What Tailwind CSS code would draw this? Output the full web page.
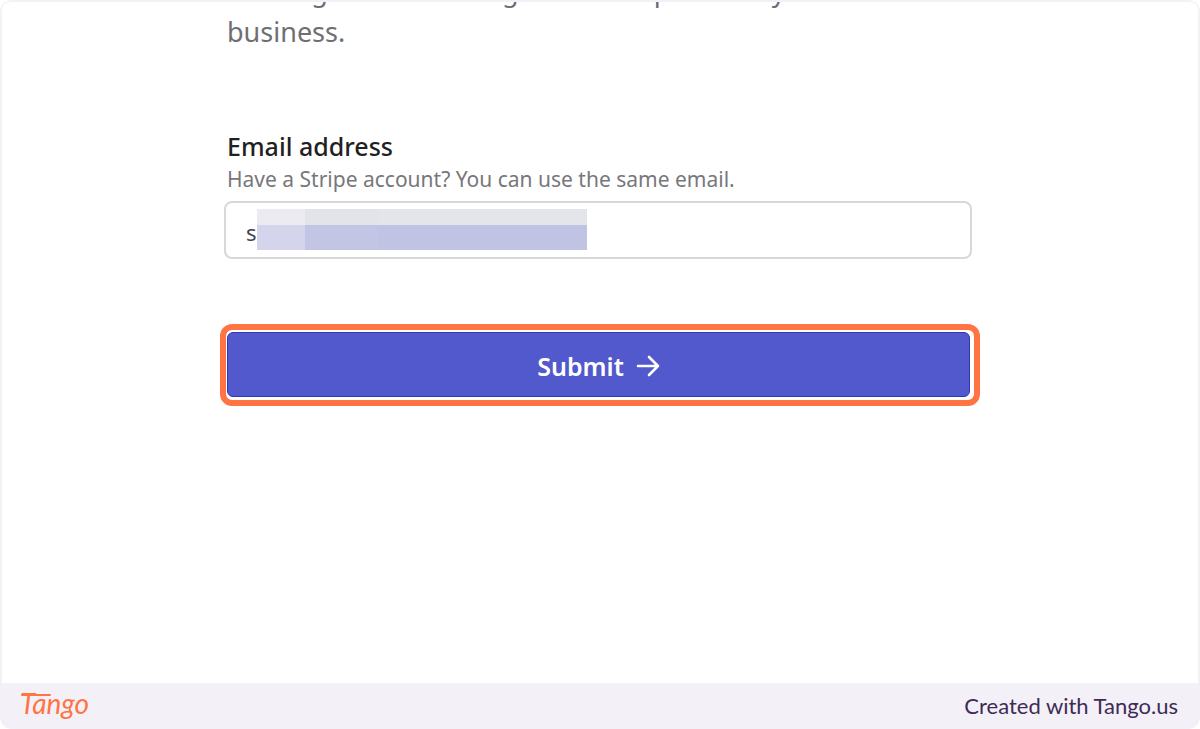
<!DOCTYPE html>
<html lang="en">
<head>
    <meta charset="UTF-8">
    <meta name="viewport" content="width=device-width, initial-scale=1.0">
    <title>Email address</title>
    <script src="https://cdn.jsdelivr.net/npm/@tailwindcss/browser@4"></script>
</head>
<body class="bg-white font-['Noto_Sans',sans-serif]">
    <div class="flex flex-col min-h-screen rounded-xl overflow-hidden bg-[#f3f1f7]">
        <main class="flex-1 mt-0.5 mx-0.5 rounded-t-lg bg-white overflow-hidden">
            <div class="max-w-[760px] mx-auto">
                <p class="-mt-8 pl-[7px] text-[27px] leading-[41px] text-[#6f6f73]">Starting new account gives direct paths only to a<br>business.</p>

                <form class="mt-[78px]">
                    <label for="email" class="block pl-[7px] text-[25px] leading-8 font-medium text-[#1f1f24]">Email address</label>
                    <p id="email-hint" class="pl-[7px] text-[21px] leading-[34px] text-[#77777c]">Have a Stripe account? You can use the same email.</p>
                    <div class="relative mx-1 mr-2 mt-[5px]">
                        <input type="email" id="email" value="s" aria-describedby="email-hint" class="block w-full h-[58px] px-5 pt-1 border-2 border-[#d8d8d8] rounded-lg bg-white text-[22px] text-[#414552] focus:outline-none">
                        <!-- Redacted part of the address -->
                        <div class="absolute left-[33px] top-2 w-[330px] h-[41px] grid grid-cols-[48px_74px_1fr] grid-rows-[16px_25px]">
                            <span class="bg-[#ecebf1]"></span>
                            <span class="bg-[#e3e4e9]"></span>
                            <span class="bg-[#e4e5ea]"></span>
                            <span class="bg-[#d4d5ec]"></span>
                            <span class="bg-[#c3c5e5]"></span>
                            <span class="bg-[#c1c3e4]"></span>
                        </div>
                    </div>

                    <div class="mt-[65px] h-[82px] pt-0.5 pl-px pr-1 pb-0.5 border-[6px] border-[#ff7442] rounded-xl">
                        <button type="submit" class="flex items-center justify-center gap-3 w-full h-[65px] pt-1 border border-[#3236b4] rounded-md bg-[#5159cc] text-white text-[25px] font-semibold">
                            Submit
                            <svg class="w-6 h-6" viewBox="0 0 24 24" fill="none" stroke="currentColor" stroke-width="2.6" stroke-linecap="round" stroke-linejoin="round">
                                <path d="M2 11h20M13 2l9 9-9 9" />
                            </svg>
                        </button>
                    </div>
                </form>
            </div>
        </main>

        <footer class="flex items-center justify-between h-[46px] pl-5 pr-[22px] font-['Lato',sans-serif]">
            <a href="#" class="block text-[#ff7442]">
                <svg class="w-[72px] h-10" viewBox="0 0 72 40" fill="none" stroke="currentColor" stroke-width="2" stroke-linecap="round">
                    <path d="M2 9h28" />
                    <text x="0" y="28" fill="currentColor" stroke="none" font-size="28" font-style="italic">Tango</text>
                </svg>
            </a>
            <p class="pb-0.5 text-[22px] text-[#3e2b56]">Created with Tango.us</p>
        </footer>
    </div>
</body>
</html>
